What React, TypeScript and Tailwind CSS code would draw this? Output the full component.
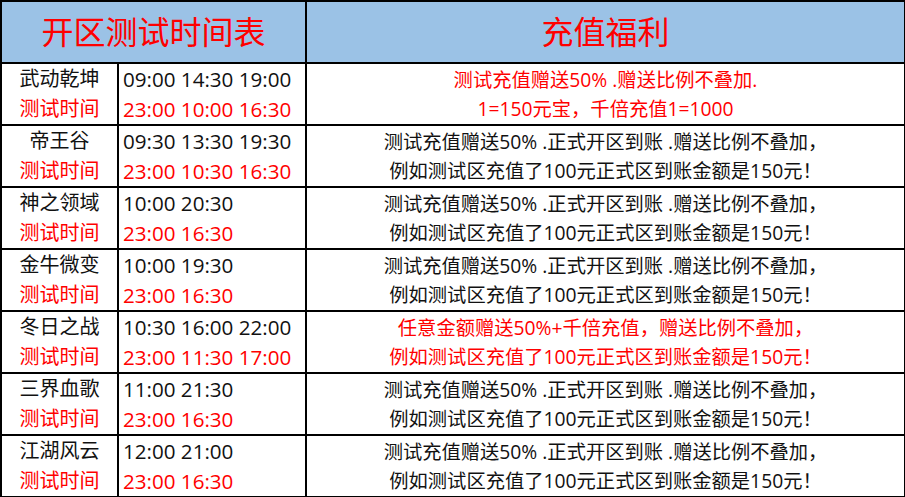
import React from "react";

type Row = {
  name: string;
  t1: string;
  t2: string;
  b1: string;
  b2: string;
  red?: boolean;
};

const std1 = "测试充值赠送50% .正式开区到账 .赠送比例不叠加，";
const std2 = "例如测试区充值了100元正式区到账金额是150元！";

const rows: Row[] = [
  { name: "武动乾坤", t1: "09:00 14:30 19:00", t2: "23:00 10:00 16:30", b1: "测试充值赠送50% .赠送比例不叠加.", b2: "1=150元宝，千倍充值1=1000", red: true },
  { name: "帝王谷", t1: "09:30 13:30 19:30", t2: "23:00 10:30 16:30", b1: std1, b2: std2 },
  { name: "神之领域", t1: "10:00 20:30", t2: "23:00 16:30", b1: std1, b2: std2 },
  { name: "金牛微变", t1: "10:00 19:30", t2: "23:00 16:30", b1: std1, b2: std2 },
  { name: "冬日之战", t1: "10:30 16:00 22:00", t2: "23:00 11:30 17:00", b1: "任意金额赠送50%+千倍充值，赠送比例不叠加，", b2: std2, red: true },
  { name: "三界血歌", t1: "11:00 21:30", t2: "23:00 16:30", b1: std1, b2: std2 },
  { name: "江湖风云", t1: "12:00 21:00", t2: "23:00 16:30", b1: std1, b2: std2 },
];

const font = { fontFamily: '"Open Sans", "Noto Sans CJK SC", sans-serif' };

export default function App() {
  return (
    <div className="w-[905px] h-[497px] bg-white" style={font}>
      <table className="table-fixed border-collapse w-[904px]">
        <colgroup>
          <col className="w-[117px]" />
          <col className="w-[188px]" />
          <col className="w-[599px]" />
        </colgroup>
        <thead>
          <tr className="h-[62px] bg-[#9bc2e6]">
            <th colSpan={2} className="border-2 border-black p-0 text-[32px] font-normal text-[#ff0000] text-center">
              开区测试时间表
            </th>
            <th className="border-2 border-black p-0 text-[32px] font-normal text-[#ff0000] text-center">
              充值福利
            </th>
          </tr>
        </thead>
        <tbody>
          {rows.map((r) => (
            <tr key={r.name} className="h-[62px]">
              <td className="border-2 border-black p-0 text-center text-[20px] leading-[30px]">
                <div className="text-[#111]">{r.name}</div>
                <div className="text-[#ff0000]">测试时间</div>
              </td>
              <td className="border-2 border-black p-0 pl-[4px] text-left text-[20.6px] leading-[30px] whitespace-nowrap">
                <div className="text-[#111]">{r.t1}</div>
                <div className="text-[#ff0000]">{r.t2}</div>
              </td>
              <td className={`border-2 border-black p-0 text-center text-[19.3px] leading-[29px] whitespace-nowrap ${r.red ? "text-[#ff0000]" : "text-[#111]"}`}>
                <div>{r.b1}</div>
                <div>{r.b2}</div>
              </td>
            </tr>
          ))}
        </tbody>
      </table>
    </div>
  );
}
